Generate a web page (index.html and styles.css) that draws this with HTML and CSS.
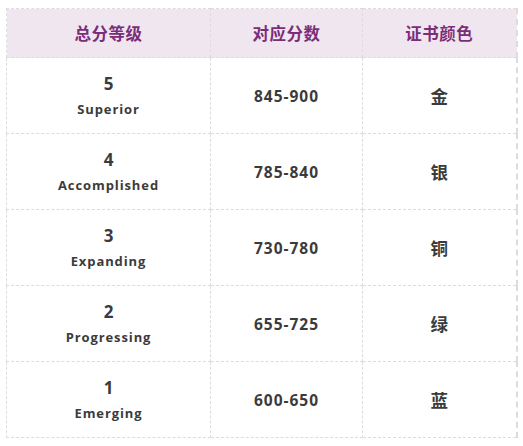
FILE: index.html
```html
<!DOCTYPE html>
<html lang="zh">
<head>
<meta charset="utf-8">
<link rel="stylesheet" href="styles.css">
</head>
<body>
<div class="wrap">
<table class="grade-table">
  <colgroup><col class="c1"><col class="c2"><col class="c3"></colgroup>
  <thead>
    <tr><th>总分等级</th><th>对应分数</th><th>证书颜色</th></tr>
  </thead>
  <tbody>
    <tr><td><div class="lvl">5</div><div class="name">Superior</div></td><td class="score">845-900</td><td class="color">金</td></tr>
    <tr><td><div class="lvl">4</div><div class="name">Accomplished</div></td><td class="score">785-840</td><td class="color">银</td></tr>
    <tr><td><div class="lvl">3</div><div class="name">Expanding</div></td><td class="score">730-780</td><td class="color">铜</td></tr>
    <tr><td><div class="lvl">2</div><div class="name">Progressing</div></td><td class="score">655-725</td><td class="color">绿</td></tr>
    <tr><td><div class="lvl">1</div><div class="name">Emerging</div></td><td class="score">600-650</td><td class="color">蓝</td></tr>
  </tbody>
</table>
</div>
</body>
</html>
```

FILE: styles.css
```css
html, body {
  margin: 0;
  padding: 0;
  background: #ffffff;
}
.wrap {
  padding: 8px 0 0 6px;
}
.grade-table {
  width: 510px;
  border-collapse: collapse;
  table-layout: fixed;
  font-family: "Open Sans", "Noto Sans CJK SC", sans-serif;
  font-weight: 700;
  color: #3b3b3b;
  border-right: 2px dashed #dcdcdc;
}
.c1 { width: 204px; }
.c2 { width: 152px; }
.c3 { width: 154px; }
.grade-table th,
.grade-table td {
  border: 1px dashed #dcdcdc;
  text-align: center;
  vertical-align: middle;
  padding: 0;
}
.grade-table th {
  background: #efe6ef;
  color: #7b2d7a;
  font-family: "Noto Sans CJK SC", sans-serif;
  font-size: 16.5px;
  height: 48px;
  letter-spacing: 0.5px;
}
.grade-table td {
  height: 75px;
}
.lvl {
  font-size: 17px;
  line-height: 22px;
}
.name {
  font-size: 13px;
  line-height: 18px;
  margin-top: 5px;
  letter-spacing: 0.9px;
}
.score {
  font-size: 15.5px;
  letter-spacing: 1px;
}
.color {
  font-family: "Noto Sans CJK SC", sans-serif;
  font-size: 17.5px;
}
```
